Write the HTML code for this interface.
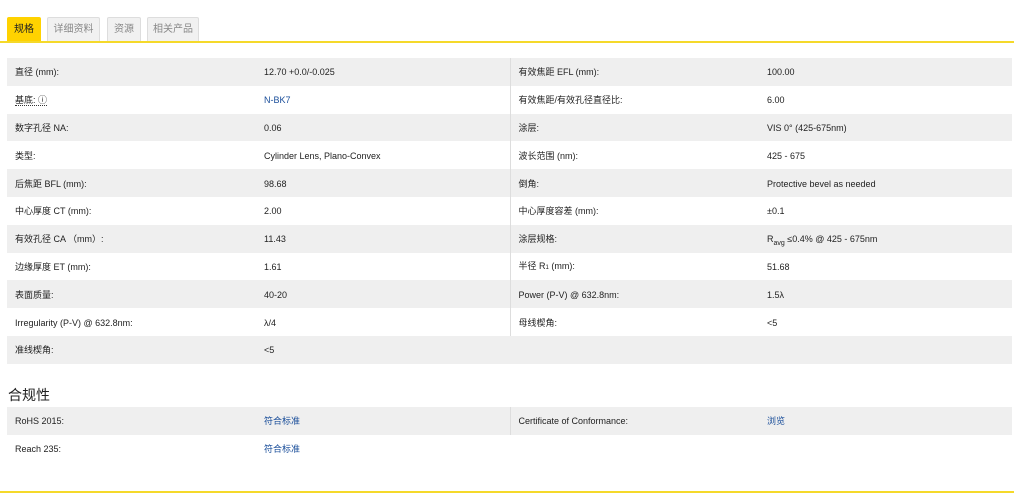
<!DOCTYPE html>
<html><head><meta charset="utf-8"><style>
*{margin:0;padding:0;box-sizing:border-box}
body{width:1014px;height:494px;background:#fff;font-family:"Liberation Sans","Noto Sans CJK SC",sans-serif;font-size:9px;color:#222;position:relative;overflow:hidden}
.tab{position:absolute;top:17px;height:24px;border:1px solid #ddd;border-bottom:none;background:#f1f1f1;color:#888;font-size:10px;line-height:23px;text-align:center;border-radius:2px 2px 0 0}
.tab.on{background:#ffd200;border-color:#ffd200;color:#222}
.yl{position:absolute;left:0;width:1014px;height:2px;background:#f5d92a}
table{position:absolute;left:7px;border-collapse:collapse;width:1005px}
td{height:27.8px;vertical-align:middle;padding-left:8px;line-height:12px;padding-top:1px}
tr.g td{background:#efefef}
td.c3{border-left:1px solid #ddd}
.a{color:#1a4e9a}
sub{line-height:0}
h3{position:absolute;left:8px;top:385px;font-size:14px;font-weight:normal;color:#222}
</style></head><body>
<div class="tab on" style="left:7px;width:34px">规格</div>
<div class="tab" style="left:47px;width:53px">详细资料</div>
<div class="tab" style="left:107px;width:34px">资源</div>
<div class="tab" style="left:147px;width:52px">相关产品</div>
<div class="yl" style="top:41px"></div>
<table style="top:58px">
<colgroup><col style="width:249px"><col style="width:254px"><col style="width:249px"><col></colgroup>
<tr class="g"><td>直径 (mm):</td><td>12.70 +0.0/-0.025</td><td class="c3">有效焦距 EFL (mm):</td><td>100.00</td></tr>
<tr><td><span style="border-bottom:1px dotted #333">基底: ⓘ</span></td><td class="a">N-BK7</td><td class="c3">有效焦距/有效孔径直径比:</td><td>6.00</td></tr>
<tr class="g"><td>数字孔径 NA:</td><td>0.06</td><td class="c3">涂层:</td><td>VIS 0° (425-675nm)</td></tr>
<tr><td>类型:</td><td>Cylinder Lens, Plano-Convex</td><td class="c3">波长范围 (nm):</td><td>425 - 675</td></tr>
<tr class="g"><td>后焦距 BFL (mm):</td><td>98.68</td><td class="c3">倒角:</td><td>Protective bevel as needed</td></tr>
<tr><td>中心厚度 CT (mm):</td><td>2.00</td><td class="c3">中心厚度容差 (mm):</td><td>±0.1</td></tr>
<tr class="g"><td>有效孔径 CA （mm）:</td><td>11.43</td><td class="c3">涂层规格:</td><td>R<sub style="font-size:7px">avg</sub> ≤0.4% @ 425 - 675nm</td></tr>
<tr><td>边缘厚度 ET (mm):</td><td>1.61</td><td class="c3">半径 R<span style="font-size:6px">1</span> (mm):</td><td>51.68</td></tr>
<tr class="g"><td>表面质量:</td><td>40-20</td><td class="c3">Power (P-V) @ 632.8nm:</td><td>1.5λ</td></tr>
<tr><td>Irregularity (P-V) @ 632.8nm:</td><td>λ/4</td><td class="c3">母线楔角:</td><td>&lt;5</td></tr>
<tr class="g"><td>准线楔角:</td><td>&lt;5</td><td></td><td></td></tr>
</table>
<h3>合规性</h3>
<table style="top:407px">
<colgroup><col style="width:249px"><col style="width:254px"><col style="width:249px"><col></colgroup>
<tr class="g"><td>RoHS 2015:</td><td class="a">符合标准</td><td class="c3">Certificate of Conformance:</td><td class="a">浏览</td></tr>
<tr><td>Reach 235:</td><td class="a">符合标准</td><td></td><td></td></tr>
</table>
<div class="yl" style="top:491px"></div>
</body></html>
